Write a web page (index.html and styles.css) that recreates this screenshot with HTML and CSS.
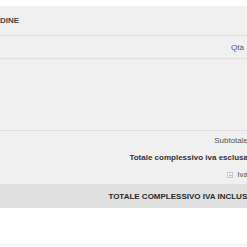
FILE: index.html
```html
<!DOCTYPE html>
<html lang="it">
<head>
<meta charset="utf-8">
<link rel="stylesheet" href="styles.css">
</head>
<body>
<div class="page">
  <div class="panel">
    <div class="head"><span class="title">DINE</span></div>
    <div class="cols"><span class="col">Qtà</span></div>
    <div class="items"></div>
    <div class="totals">
      <div class="trow sub"><span>Subtotale</span></div>
      <div class="trow net"><span>Totale complessivo iva esclusa</span></div>
      <div class="trow iva"><span class="plus">+</span><span>Iva</span></div>
    </div>
    <div class="grand"><span>TOTALE COMPLESSIVO IVA INCLUSA</span></div>
  </div>
  <div class="after"></div>
</div>
</body>
</html>
```

FILE: styles.css
```css
html, body {
  margin: 0;
  padding: 0;
  background: #fff;
  overflow: hidden;
}
body {
  font-family: "Liberation Sans", Arial, sans-serif;
  font-size: 8px;
  color: #333;
}
.page {
  width: 260px;
  padding-top: 6px;
}
.panel {
  background: #f0f0f0;
}
.head {
  height: 29px;
  display: flex;
  align-items: center;
  border-bottom: 1px solid #dcdcdc;
}
.title {
  font-weight: bold;
  color: #444;
}
.cols {
  height: 22px;
  display: flex;
  align-items: center;
  justify-content: flex-end;
  padding-right: 16px;
  border-bottom: 1px solid #e2e2e2;
  color: #555;
}
.items {
  height: 71px;
  border-bottom: 1px solid #e0e0e0;
}
.totals {
  display: flex;
  flex-direction: column;
  align-items: flex-end;
  padding-right: 12px;
  padding-top: 1px;
  padding-bottom: 1px;
}
.trow {
  height: 17px;
  display: flex;
  align-items: center;
  gap: 4px;
}
.sub { color: #555; }
.net { font-weight: bold; color: #333; }
.iva { color: #555; }
.plus {
  width: 6px;
  height: 6px;
  border: 1px solid #c8c8c8;
  background: #f6f6f6;
  font-size: 6px;
  line-height: 5px;
  text-align: center;
  color: #999;
  box-sizing: border-box;
}
.grand {
  height: 24px;
  background: #e0e0e0;
  display: flex;
  align-items: center;
  justify-content: flex-end;
  padding-right: 7px;
  font-weight: bold;
  color: #2a2a2a;
}
.after {
  height: 36px;
  border-bottom: 1px solid #ececec;
}
```
